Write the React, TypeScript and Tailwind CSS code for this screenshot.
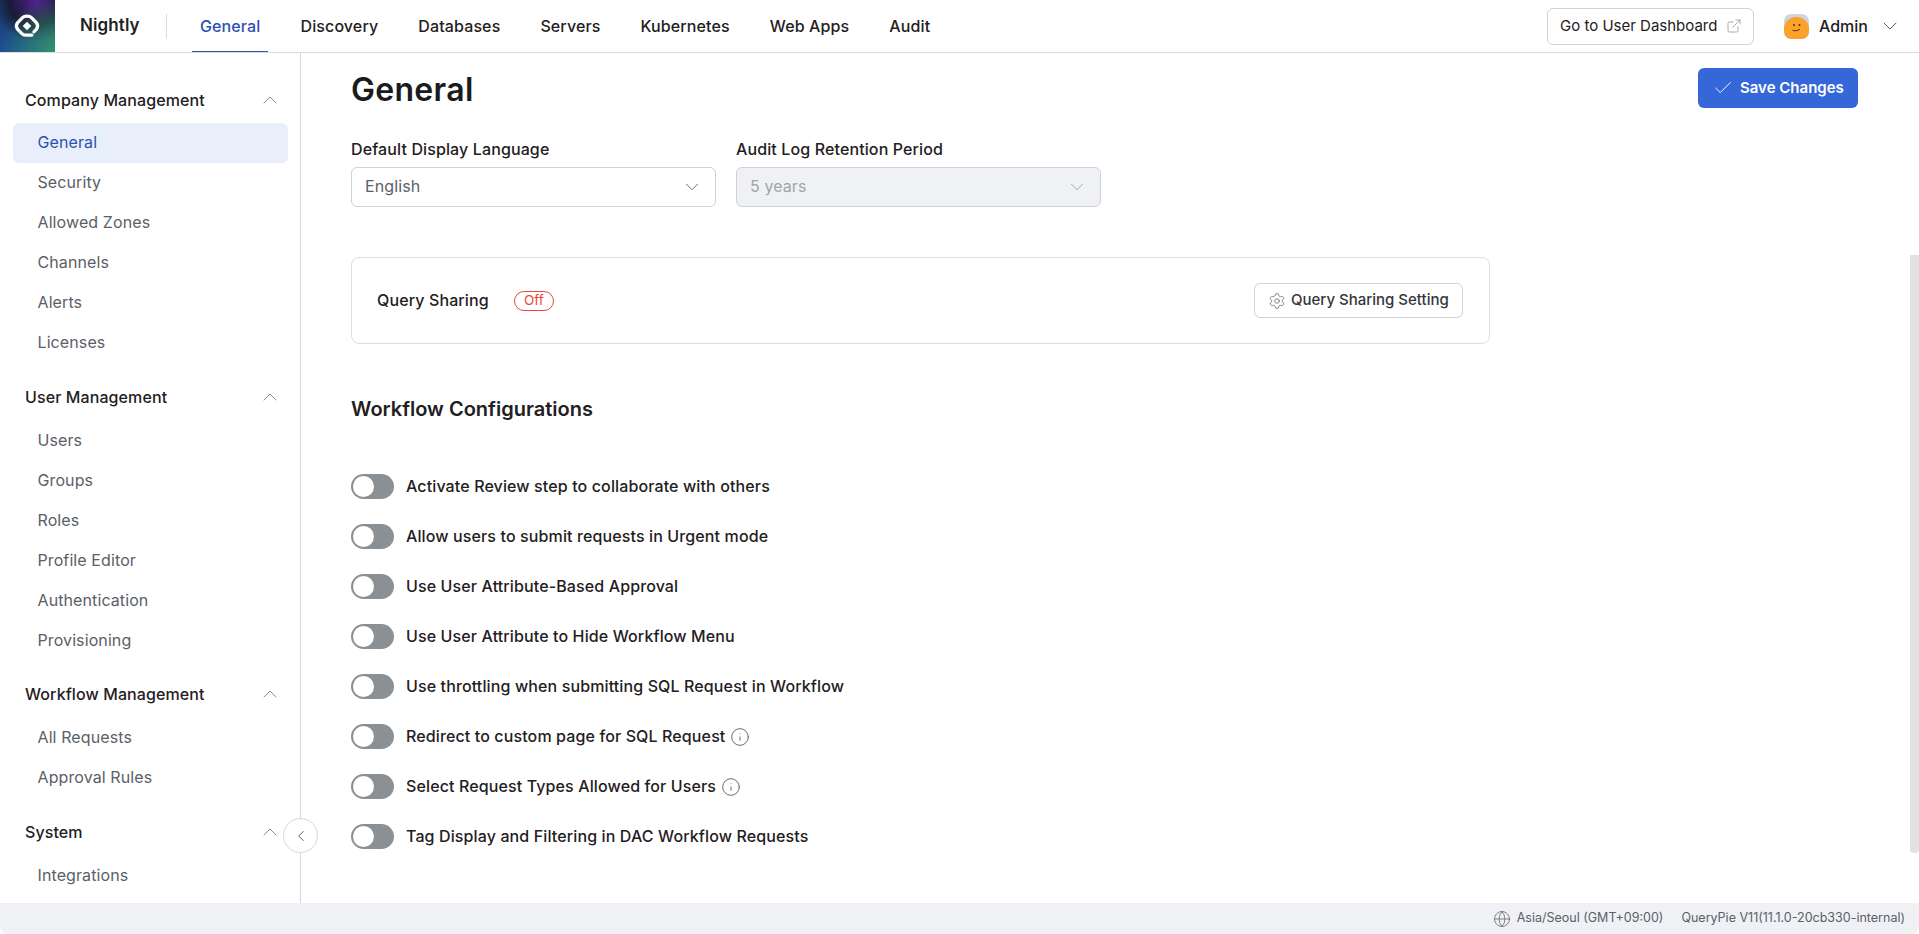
import React from "react";
import { ChevronDown, ChevronUp, ChevronLeft, Check, Settings, Info, Globe, ExternalLink } from "lucide-react";

const nav = ["General", "Discovery", "Databases", "Servers", "Kubernetes", "Web Apps", "Audit"];
const groups: { title: string; items: string[] }[] = [
  { title: "Company Management", items: ["General", "Security", "Allowed Zones", "Channels", "Alerts", "Licenses"] },
  { title: "User Management", items: ["Users", "Groups", "Roles", "Profile Editor", "Authentication", "Provisioning"] },
  { title: "Workflow Management", items: ["All Requests", "Approval Rules"] },
  { title: "System", items: ["Integrations"] },
];
const toggles: { label: string; info?: boolean }[] = [
  { label: "Activate Review step to collaborate with others" },
  { label: "Allow users to submit requests in Urgent mode" },
  { label: "Use User Attribute-Based Approval" },
  { label: "Use User Attribute to Hide Workflow Menu" },
  { label: "Use throttling when submitting SQL Request in Workflow" },
  { label: "Redirect to custom page for SQL Request", info: true },
  { label: "Select Request Types Allowed for Users", info: true },
  { label: "Tag Display and Filtering in DAC Workflow Requests" },
];

function Logo() {
  return (
    <div className="w-[55px] h-[52px] shrink-0 flex items-center justify-center bg-[radial-gradient(circle_at_100%_100%,#33936c_0%,rgba(51,147,108,0)_72%),radial-gradient(circle_at_65%_0%,#52208f_0%,#1a1a35_42%,rgba(26,26,53,0)_68%),linear-gradient(180deg,#173a6e,#1f4f94)]">
      <svg className="-ml-[1px]" width="28" height="28" viewBox="0 0 26 26" fill="none">
        <path d="M17.5 21.4H11.5C10.2 21.4 9.2 21 8.3 20.1L4.2 16C3 14.3 3 11.7 4.2 10L8.6 5.4C10.6 3.4 15.4 3.4 17.4 5.4L21.8 10C23 11.7 23 14.3 21.8 16L19.4 18.4" stroke="white" strokeWidth="3" strokeLinecap="round" />
        <path d="M13 9L17 13L13 17L9 13Z" fill="white" />
      </svg>
    </div>
  );
}

function Avatar() {
  return (
    <div className="w-[25px] h-[25px] rounded-[7px] bg-[#ccd5e0] overflow-hidden relative">
      <div className="absolute left-0 right-0 bottom-0 top-[3px] rounded-t-[12px] rounded-b-[7px] bg-[#fba22b]" />
      <svg className="absolute inset-0" width="25" height="25" viewBox="0 0 25 25" fill="none">
        <circle cx="10" cy="11" r="1" fill="#4b3210" />
        <circle cx="15.5" cy="11" r="1" fill="#4b3210" />
        <path d="M9 16.5C11 17 13 17 15.5 15.5" stroke="#4b3210" strokeWidth="1" strokeLinecap="round" />
      </svg>
    </div>
  );
}

function Toggle() {
  return (
    <div className="w-[43px] h-[25px] rounded-full bg-[#8b9095] p-[2px] shrink-0">
      <div className="w-[21px] h-[21px] rounded-full bg-white" />
    </div>
  );
}

function SelectBox({ value, disabled }: { value: string; disabled?: boolean }) {
  return (
    <div
      className={
        "h-10 w-[365px] rounded-md border border-[#ced1d8] pl-[13px] pr-[12px] flex items-center justify-between " +
        (disabled ? "bg-[#f0f1f5] text-[#a0a4ab]" : "bg-white text-[#5b6068]")
      }
    >
      <span className="text-[16px] tracking-[0.1px] pb-[2px]">{value}</span>
      <ChevronDown size={22} strokeWidth={1} className={disabled ? "text-[#a0a4ab]" : "text-[#5b6068]"} />
    </div>
  );
}

export default function App() {
  return (
    <div className="h-[934px] w-full overflow-hidden bg-white flex flex-col text-[#1c1d1f] font-['Inter','Liberation_Sans',sans-serif]">
      <header className="h-[53px] shrink-0 bg-white border-b border-[#d9dde3] flex items-stretch">
        <Logo />
        <div className="w-[111px] pl-[25px] flex items-center text-[17px] tracking-[0.1px] font-semibold text-[#1f2022]">Nightly</div>
        <div className="w-px h-[25px] self-center bg-[#d9dde3] mr-[25px]" />
        <nav className="flex items-stretch gap-[24px]">
          {nav.map((n, i) => (
            <div
              key={n}
              className={
                "flex items-center px-2 text-[16px] tracking-[0.12px] font-medium " +
                (i === 0 ? "text-[#2d50b4] border-b border-[#2d50b4]" : "text-[#1f2022]")
              }
            >
              {n}
            </div>
          ))}
        </nav>
        <div className="ml-auto flex items-center">
          <div className="h-[37px] w-[207px] rounded-md border border-[#ced1d8] pl-[12px] flex items-center gap-[9px] text-[15px] text-[#1f2022]">
            <span>Go to User Dashboard</span>
            <ExternalLink size={16} strokeWidth={1} className="text-[#7d8289]" />
          </div>
          <div className="ml-[30px] mr-[17px] flex items-center">
            <Avatar />
            <span className="ml-[10px] w-[48px] pb-[1px] text-[16px] font-medium text-[#1f2022]">Admin</span>
            <ChevronDown size={24} strokeWidth={1} className="ml-[11px] text-[#5b6068]" />
          </div>
        </div>
      </header>

      <div className="h-[850px] shrink-0 flex bg-white relative">
        <aside className="w-[301px] shrink-0 border-r border-[#d5d8de] pt-[32px] overflow-hidden">
          {groups.map((g, gi) => (
            <div key={g.title} className={gi === 1 ? "mb-[18px]" : "mb-[19px]"}>
              <div className="h-[30px] pl-[25px] pr-[18px] flex items-center justify-between">
                <span className="text-[16px] tracking-[0.1px] font-medium text-[#1f2022]">{g.title}</span>
                <ChevronUp size={24} strokeWidth={1} className="text-[#8a8f96]" />
              </div>
              <ul className={(gi === 0 ? "mt-[8px]" : "mt-[9px]") + " flex flex-col"}>
                {g.items.map((it, i) => (
                  <li
                    key={it}
                    className={
                      "h-10 ml-[13px] w-[275px] pl-[24.5px] pb-[2px] rounded-md flex items-center text-[16px] tracking-[0.1px] " +
                      (g.title === "Company Management" && i === 0
                        ? "bg-[#e8effb] text-[#2d50b4]"
                        : "text-[#5b6068]")
                    }
                  >
                    {it}
                  </li>
                ))}
              </ul>
            </div>
          ))}
        </aside>

        <button className="absolute left-[283px] top-[765px] w-[35px] h-[35px] rounded-full border border-[#d5d8de] bg-white flex items-center justify-center">
          <ChevronLeft size={18} strokeWidth={1.25} className="text-[#4e5258]" />
        </button>

        <main className="flex-1 relative overflow-hidden pl-[50px] pt-[14px]">
          <div className="w-[1139px]">
            <h1 className="h-[44px] pt-[2px] flex items-center text-[32px] tracking-[0.3px] font-semibold leading-none text-[#1a1b1d]">General</h1>
            <div className="mt-[26px] flex gap-5">
              <div>
                <div className="h-[24px] flex items-center text-[16px] tracking-[0.12px] font-medium text-[#1f2022]">Default Display Language</div>
                <div className="mt-[6px]"><SelectBox value="English" /></div>
              </div>
              <div>
                <div className="h-[24px] flex items-center text-[16px] tracking-[0.12px] font-medium text-[#1f2022]">Audit Log Retention Period</div>
                <div className="mt-[6px]"><SelectBox value="5 years" disabled /></div>
              </div>
            </div>

            <section className="mt-[50px] h-[87px] rounded-lg border border-[#dcdee3] pl-[25px] pr-[26px] flex items-center">
              <span className="text-[16px] tracking-[0.12px] font-medium text-[#1f2022] pb-[2px]">Query Sharing</span>
              <span className="ml-[25px] h-5 w-[40px] rounded-full border border-[#e5483d] text-[#e5483d] text-[13.5px] pb-[1px] flex items-center justify-center">Off</span>
              <div className="ml-auto h-[35px] w-[209px] rounded-md border border-[#ced1d8] pl-[13px] flex items-center gap-[5px] text-[15px] font-medium text-[#33363b]">
                <Settings size={18} strokeWidth={1} className="text-[#5b6068]" />
                <span>Query Sharing Setting</span>
              </div>
            </section>

            <h2 className="mt-[51px] h-[28px] flex items-center text-[20px] font-semibold text-[#1f2022]">Workflow Configurations</h2>

            <div className="mt-[51px] flex flex-col gap-[25px]">
              {toggles.map((t) => (
                <div key={t.label} className="h-[25px] flex items-center">
                  <Toggle />
                  <span className="ml-[12px] pb-[2px] text-[16px] tracking-[0.12px] font-medium text-[#1f2022]">{t.label}</span>
                  {t.info && <Info size={20} strokeWidth={1} className="ml-[5px] text-[#4e5258]" />}
                </div>
              ))}
            </div>
          </div>

          <div className="absolute right-[61px] top-[15px] w-[160px] h-[40px] rounded-md bg-[#3667d9] pl-[14px] flex items-center gap-[6px] text-white text-[15px] font-semibold">
            <Check size={22} strokeWidth={1} />
            <span>Save Changes</span>
          </div>
          <div className="absolute right-0 top-[202px] w-[9px] h-[598px] rounded-b-[3px] bg-[#e2e2e4]" />
        </main>
      </div>

      <footer className="h-[31px] shrink-0 bg-[#f0f1f5] rounded-b-lg flex items-center justify-end pr-[14px] text-[12.5px] text-[#5b6068]">
        <Globe size={18} strokeWidth={1} className="text-[#5b6068]" />
        <span className="ml-[6px]">Asia/Seoul (GMT+09:00)</span>
        <span className="ml-[18px]">QueryPie V11(11.1.0-20cb330-internal)</span>
      </footer>
    </div>
  );
}
